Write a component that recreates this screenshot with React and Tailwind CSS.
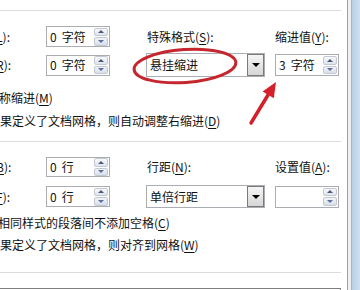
const U = ({ children }) => <span className="underline underline-offset-[2px] decoration-1">{children}</span>;

const Spin = () => (
  <div className="flex flex-col gap-px w-[14px] h-[18px]">
    <div className="flex-1 flex items-center justify-center border border-[#c3c8d2] rounded-[2px] bg-linear-to-b from-[#f7f8fb] to-[#dfe4ec]">
      <div className="w-0 h-0 border-l-[3px] border-r-[3px] border-b-[3px] border-l-transparent border-r-transparent border-b-[#4a5a7c]" />
    </div>
    <div className="flex-1 flex items-center justify-center border border-[#c3c8d2] rounded-[2px] bg-linear-to-b from-[#f1f3f7] to-[#d9dfe9]">
      <div className="w-0 h-0 border-l-[3px] border-r-[3px] border-t-[3px] border-l-transparent border-r-transparent border-t-[#5b6fa0]" />
    </div>
  </div>
);

const SpinBox = ({ num, unit, h }) => (
  <div className={`flex items-center justify-between w-[64px] ${h} border border-[#abadb3] pl-[3px] pr-[1px] bg-white`}>
    <span className="whitespace-nowrap">
      {num}
      {unit && <span className="ml-[5px]">{unit}</span>}
    </span>
    <Spin />
  </div>
);

const Select = ({ value, h }) => (
  <div className={`flex w-[119px] ${h} border border-[#abadb3] bg-white`}>
    <span className="flex-1 flex items-center pl-[3px]">{value}</span>
    <div className="w-[17px] flex items-center justify-center border border-[#7a7a7a] bg-linear-to-b from-[#f5f5f5] to-[#d6d6d6]">
      <div className="w-0 h-0 border-l-[4px] border-r-[4px] border-t-[4px] border-l-transparent border-r-transparent border-t-black" />
    </div>
  </div>
);

export default function App() {
  return (
    <div className="relative flex w-[360px] h-[290px] overflow-hidden bg-white text-[12px] leading-[16px] text-[#111] font-['Noto_Sans_CJK_SC','Noto_Sans',sans-serif]">
      <div className="w-[347px] flex flex-col">
        <div className="mt-[10px] w-[341px] h-px bg-[#dcdcdc]" />

        {/* indent rows */}
        <div className="mt-[15px] flex items-center h-[21px]">
          <div className="w-[46px] whitespace-nowrap"><span className="ml-[-32px]">左侧(<U>L</U>):</span></div>
          <SpinBox num="0" unit="字符" h="h-[21px]" />
          <div className="ml-[36px] w-[119px] pl-px">特殊格式(<U>S</U>):</div>
          <div className="ml-[10px] w-[64px]">缩进值(<U>Y</U>):</div>
        </div>
        <div className="mt-[6px] flex items-center h-[24px]">
          <div className="w-[46px] whitespace-nowrap"><span className="ml-[-32px]">右侧(<U>R</U>):</span></div>
          <SpinBox num="0" unit="字符" h="h-[21px]" />
          <div className="ml-[36px]"><Select value="悬挂缩进" h="h-[24px]" /></div>
          <div className="ml-[10px]"><SpinBox num="3" unit="字符" h="h-[22px]" /></div>
        </div>
        <div className="mt-[13px] ml-[-13px] whitespace-nowrap">对称缩进(<U>M</U>)</div>
        <div className="mt-[7px] ml-[-12px] whitespace-nowrap">如果定义了文档网格，则自动调整右缩进(<U>D</U>)</div>

        <div className="mt-[12px] w-[341px] h-px bg-[#dcdcdc]" />

        {/* spacing rows */}
        <div className="mt-[15px] flex items-center h-[20px]">
          <div className="w-[46px] whitespace-nowrap"><span className="ml-[-32px]">段前(<U>B</U>):</span></div>
          <SpinBox num="0" unit="行" h="h-[20px]" />
          <div className="ml-[36px] w-[119px] pl-px">行距(<U>N</U>):</div>
          <div className="ml-[10px] w-[64px]">设置值(<U>A</U>):</div>
        </div>
        <div className="mt-[8px] flex items-center h-[23px]">
          <div className="w-[46px] whitespace-nowrap"><span className="ml-[-32px]">段后(<U>F</U>):</span></div>
          <SpinBox num="0" unit="行" h="h-[21px]" />
          <div className="ml-[36px]"><Select value="单倍行距" h="h-[23px]" /></div>
          <div className="ml-[10px]"><SpinBox num="" unit="" h="h-[22px]" /></div>
        </div>
        <div className="mt-[7px] ml-[-14px] whitespace-nowrap">在相同样式的段落间不添加空格(<U>C</U>)</div>
        <div className="mt-[6px] ml-[-12px] whitespace-nowrap">如果定义了文档网格，则对齐到网格(<U>W</U>)</div>

        <div className="mt-[19px] w-[341px] h-px bg-[#dcdcdc]" />
        <div className="mt-[15px] w-[341px] flex-1 border-t border-r border-[#7f7f7f]" />
      </div>

      {/* window frame */}
      <div className="w-px bg-[#a3a3a3]" />
      <div className="w-[3px] bg-[#f0f0f0]" />
      <div className="w-px bg-[#a9b3bf]" />
      <div className="flex-1 bg-linear-to-r from-[#b9cfe6] to-[#cfe0f2]" />

      <svg className="absolute inset-0 pointer-events-none" width="360" height="290">
        <ellipse cx="185" cy="66" rx="51" ry="16.5" transform="rotate(-4 185 66)" fill="none" stroke="#c6262e" strokeWidth="3" />
        <line x1="251" y1="123" x2="268" y2="95" stroke="#d3202a" strokeWidth="3.5" strokeLinecap="round" />
        <polygon points="276,82 262.6,91.4 273.8,98.2" fill="#d3202a" />
      </svg>
    </div>
  );
}
